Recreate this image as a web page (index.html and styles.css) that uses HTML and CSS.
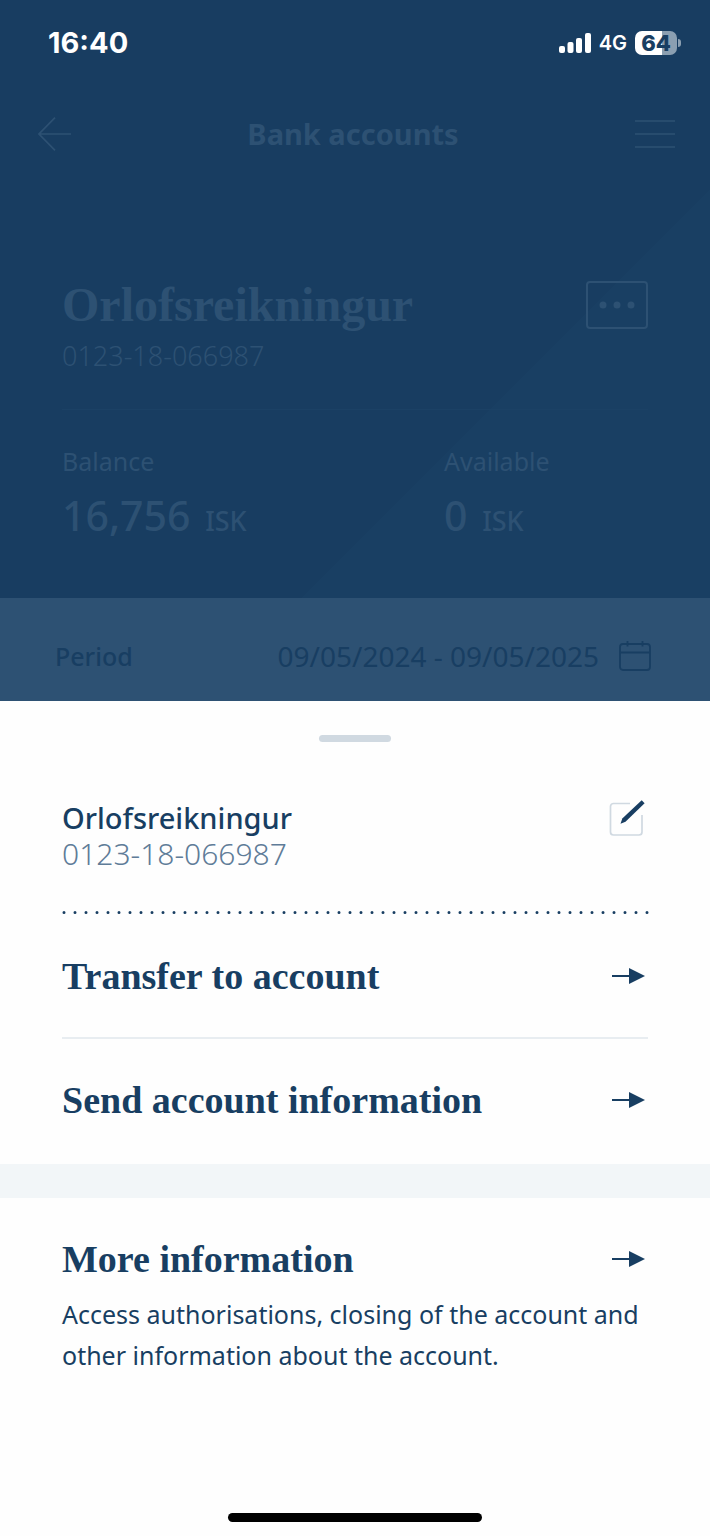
FILE: index.html
```html
<!DOCTYPE html>
<html lang="en">
<head>
    <meta charset="utf-8">
    <meta name="viewport" content="width=device-width, initial-scale=1">
    <title>Bank accounts</title>
    <link rel="stylesheet" href="styles.css">
</head>
<body>
    <div class="status">
        <span class="time">16:40</span>
        <div class="status-icons">
            <svg width="32" height="20" viewBox="0 0 32 20" fill="#fff">
                <rect x="0" y="13" width="6" height="7" rx="2"/>
                <rect x="8.5" y="9" width="6" height="11" rx="2"/>
                <rect x="17" y="5" width="6" height="15" rx="2"/>
                <rect x="26" y="0" width="6" height="20" rx="2"/>
            </svg>
            <span class="network">4G</span>
            <div class="battery"><span class="battery-level">64</span></div>
        </div>
    </div>

    <header class="nav">
        <button class="icon-btn" aria-label="Back">
            <svg width="33" height="34" viewBox="0 0 33 34" fill="none" stroke="currentColor" stroke-width="1.7">
                <path d="M17 .7 1 17l16 16.300M1 17h32"/>
            </svg>
        </button>
        <h1 class="nav-title">Bank accounts</h1>
        <button class="icon-btn" aria-label="Menu">
            <svg width="40" height="30" viewBox="0 0 40 30" fill="none" stroke="currentColor" stroke-width="1.7">
                <path d="M0 2h40M0 15h40M0 28h40"/>
            </svg>
        </button>
    </header>

    <!-- account -->
    <section class="account">
        <div class="account-head">
            <h2 class="account-name">Orlofsreikningur</h2>
            <button class="more-btn" aria-label="More">
                <svg width="36" height="8" viewBox="0 0 36 8" fill="currentColor">
                    <circle cx="4" cy="4" r="3.500"/>
                    <circle cx="18" cy="4" r="3.500"/>
                    <circle cx="32" cy="4" r="3.500"/>
                </svg>
            </button>
        </div>
        <div class="account-number">0123-18-066987</div>
        <div class="balances">
            <div class="balance">
                <div class="label">Balance</div>
                <div class="amount">16,756 <span class="currency">ISK</span></div>
            </div>
            <div class="balance">
                <div class="label">Available</div>
                <div class="amount">0 <span class="currency">ISK</span></div>
            </div>
        </div>
    </section>

    <div class="period">
        <span class="period-label">Period</span>
        <button class="period-btn">
            09/05/2024 - 09/05/2025
            <svg width="32" height="30" viewBox="0 0 32 30" fill="none" stroke="currentColor" stroke-width="1.800">
                <rect x="1" y="3" width="30" height="26" rx="3"/>
                <path d="M1 11.500h30M8.500 0v5.500M23.500 0v5.500"/>
            </svg>
        </button>
    </div>

    <!-- bottom sheet -->
    <main class="sheet">
        <div class="handle"></div>
        <div class="sheet-head">
            <div>
                <div class="sheet-name">Orlofsreikningur</div>
                <div class="sheet-number">0123-18-066987</div>
            </div>
            <button class="icon-btn edit-btn" aria-label="Edit">
                <svg width="36" height="36" viewBox="0 0 36 36" fill="none">
                    <path d="M21 3.500H4.500a3 3 0 0 0-3 3V32a3 3 0 0 0 3 3H30a3 3 0 0 0 3-3V15" stroke="#d0d9e1" stroke-width="1.700"/>
                    <path d="M32.700.2 35.600 3.200 16.500 21.700 11.500 23.700 13.300 18.600z" fill="#183e62"/>
                </svg>
            </button>
        </div>
        <svg class="dots" height="3"><line x1="2" y1="1.500" x2="100%" y2="1.500"/></svg>

        <a class="action" href="#">
            Transfer to account
            <svg class="arrow" width="33" height="16" viewBox="0 0 33 16"><path d="M0 7h17V0l16 8-16 8V9H0z"/></svg>
        </a>
        <a class="action" href="#">
            Send account information
            <svg class="arrow" width="33" height="16" viewBox="0 0 33 16"><path d="M0 7h17V0l16 8-16 8V9H0z"/></svg>
        </a>

        <div class="band"></div>

        <a class="action action-info" href="#">
            More information
            <svg class="arrow" width="33" height="16" viewBox="0 0 33 16"><path d="M0 7h17V0l16 8-16 8V9H0z"/></svg>
        </a>
        <p class="info-text">Access authorisations, closing of the account and other information about the account.</p>
        <div class="home-bar"></div>
    </main>
</body>
</html>
```
FILE: styles.css
```css
* {
    box-sizing: border-box;
}
body {
    margin: 0;
    font-family: "Noto Sans", sans-serif;
    font-size: 25px;
    line-height: 36px;
    color: #183e62;
    background: linear-gradient(135deg, #183d61 636px, #193f63 636px);
    min-height: 100vh;
    display: flex;
    flex-direction: column;
}
h1, h2, p {
    margin: 0;
}
button {
    font: inherit;
    color: inherit;
    background: none;
    border: none;
    padding: 0;
    cursor: pointer;
}
svg {
    display: block;
    flex: none;
}

/* status bar */
.status {
    display: flex;
    justify-content: space-between;
    align-items: center;
    height: 86px;
    padding: 0 29px 0 48px;
    font-family: Inter, sans-serif;
    color: #fff;
}
.time {
    font-size: 29px;
    font-weight: 700;
}
.status-icons {
    display: flex;
    align-items: center;
    gap: 8px;
}
.network {
    font-size: 20px;
    font-weight: 600;
}
.battery {
    position: relative;
    width: 42px;
    height: 24px;
    margin-right: 4px;
    border-radius: 7px;
    background: linear-gradient(90deg, #fff 64%, #8b9fb1 64%);
    text-align: center;
}
.battery::after {
    content: "";
    position: absolute;
    right: -4px;
    top: 8px;
    width: 3px;
    height: 8px;
    border-radius: 0 4px 4px 0;
    background-color: #8b9fb1;
}
.battery-level {
    display: block;
    font-size: 22px;
    font-weight: 800;
    line-height: 24px;
    color: #183e62;
}

/* top navigation */
.nav {
    display: flex;
    justify-content: space-between;
    align-items: center;
    height: 96px;
    padding: 0 35px 0 38px;
    color: #2d5173;
}
.nav-title {
    font-size: 29px;
    font-weight: 700;
}

/* account */
.account {
    padding: 90px 62px 59px;
    color: #2d5173;
}
.account-head {
    display: flex;
    justify-content: space-between;
    align-items: center;
}
.account-name {
    font-family: "Liberation Serif", serif;
    font-size: 48px;
    line-height: 66px;
    font-weight: 700;
}
.account-number {
    font-size: 27px;
    font-weight: 300;
}
.more-btn {
    display: flex;
    justify-content: center;
    align-items: center;
    width: 62px;
    height: 48px;
    border: 2px solid #2d5173;
    border-radius: 4px;
}
.balances {
    display: grid;
    grid-template-columns: 382fr 204fr;
    margin-top: 35px;
    padding-top: 33px;
    border-top: 1px solid #1b4165;
}
.amount {
    margin-top: 12px;
    font-size: 41px;
    line-height: 48px;
    font-weight: 500;
}
.currency {
    margin-left: 4px;
    font-size: 27px;
    line-height: 27px;
}

/* period */
.period {
    display: flex;
    justify-content: space-between;
    padding: 40px 59px 27px 55px;
    background-color: #2d5173;
}
.period-label {
    font-weight: 500;
}
.period-btn {
    display: flex;
    align-items: center;
    gap: 20px;
    font-size: 28px;
}

/* bottom sheet */
.sheet {
    flex: 1;
    display: flex;
    flex-direction: column;
    padding: 34px 62px 14px;
    background-color: #fefefe;
}
.handle {
    width: 72px;
    height: 7px;
    margin: 0 auto 58px;
    border-radius: 4px;
    background-color: #d0d9e1;
}
.sheet-head {
    display: flex;
    justify-content: space-between;
    align-items: flex-start;
    padding-right: 3px;
}
.sheet-name {
    font-size: 29px;
    font-weight: 500;
}
.sheet-number {
    font-size: 30px;
    font-weight: 300;
    color: #5f7c98;
}
.dots {
    width: 100%;
    margin-top: 39px;
    overflow: visible;
}
.dots line {
    stroke: #183e62;
    stroke-width: 3;
    stroke-linecap: round;
    stroke-dasharray: 0 11;
}
.action {
    display: flex;
    justify-content: space-between;
    align-items: center;
    height: 123px;
    padding-right: 3px;
    font-family: "Liberation Serif", serif;
    font-size: 38px;
    font-weight: 700;
    color: #183e62;
    text-decoration: none;
}
.action + .action {
    border-top: 2px solid #e8edf1;
}
.arrow {
    fill: #183e62;
}
.band {
    height: 34px;
    margin: 4px -62px 0;
    background-color: #f2f6f8;
}
.action-info {
    height: 96px;
    padding-top: 26px;
}
.info-text {
    line-height: 41px;
}
.home-bar {
    width: 254px;
    height: 9px;
    margin: auto auto 0;
    border-radius: 5px;
    background-color: #000;
}
```
